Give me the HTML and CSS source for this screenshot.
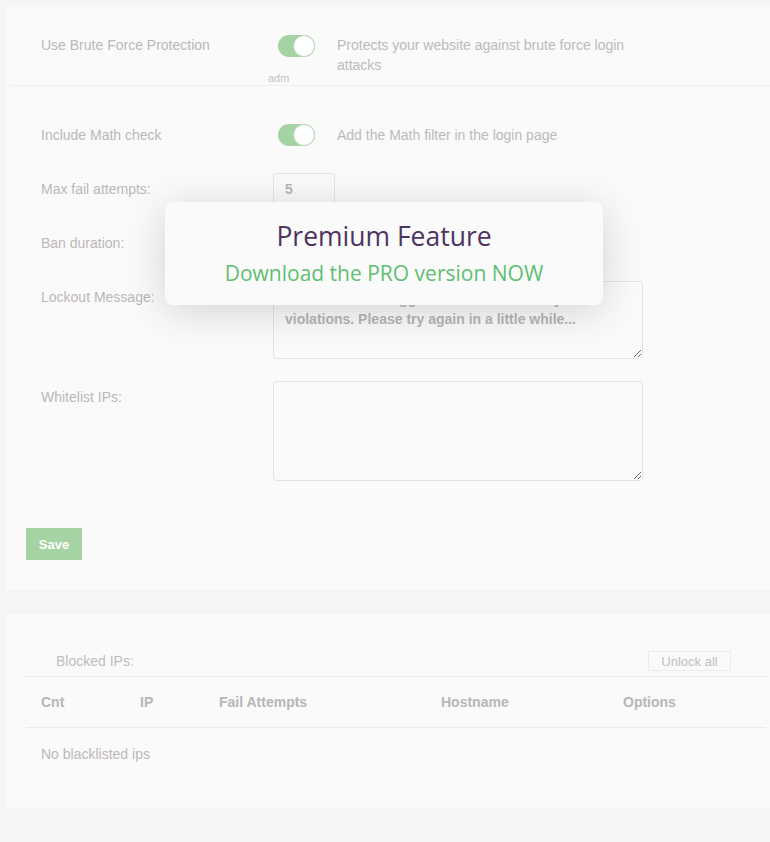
FILE: index.html
```html
<!DOCTYPE html>
<html>
<head>
<meta charset="utf-8">
<link rel="stylesheet" href="styles.css">
</head>
<body>
<div class="page">
  <section class="panel panel-settings">
    <div class="row-first">
      <div class="label">Use Brute Force Protection</div>
      <div class="ctrl">
        <span class="toggle"><span class="knob"></span></span>
        <span class="user">adm</span>
      </div>
      <div class="desc">Protects your website against brute force login attacks</div>
    </div>
    <div class="sep"></div>
    <div class="form">
      <div class="label">Include Math check</div>
      <div class="ctrl ctrl-inline">
        <span class="toggle"><span class="knob"></span></span>
        <span class="desc-inline">Add the Math filter in the login page</span>
      </div>

      <div class="label">Max fail attempts:</div>
      <div class="ctrl"><input class="num" type="text" value="5"></div>

      <div class="label">Ban duration:</div>
      <div class="ctrl"><input class="num" type="text" value="60"></div>

      <div class="label">Lockout Message:</div>
      <div class="ctrl"><textarea class="area area-msg">You have been logged out due to security violations. Please try again in a little while...</textarea></div>

      <div class="label">Whitelist IPs:</div>
      <div class="ctrl"><textarea class="area area-ips"></textarea></div>
    </div>
    <button class="save">Save</button>
  </section>

  <section class="panel panel-blocked">
    <div class="blocked-head">
      <span class="blocked-title">Blocked IPs:</span>
      <button class="unlock">Unlock all</button>
    </div>
    <table class="ips">
      <thead>
        <tr>
          <th class="c-cnt">Cnt</th>
          <th class="c-ip">IP</th>
          <th class="c-fail">Fail Attempts</th>
          <th class="c-host">Hostname</th>
          <th class="c-opt">Options</th>
        </tr>
      </thead>
      <tbody>
        <tr><td colspan="5">No blacklisted ips</td></tr>
      </tbody>
    </table>
  </section>

  <div class="modal">
    <div class="modal-title">Premium Feature</div>
    <div class="modal-link">Download the PRO version NOW</div>
  </div>
</div>
</body>
</html>
```

FILE: styles.css
```css
* { box-sizing: border-box; }

html, body {
  margin: 0;
  padding: 0;
  background: #f5f5f5;
}

body {
  font-family: "Liberation Sans", Arial, sans-serif;
  font-size: 14px;
  color: #bcb7b7;
}

.page {
  position: relative;
  width: 770px;
  height: 842px;
  padding-top: 5px;
}

.panel {
  background: #fafafa;
  margin-left: 6px;
}

.panel-settings {
  height: 585px;
  padding-top: 30px;
}

.row-first {
  display: grid;
  grid-template-columns: 232px 64px 300px;
  padding-left: 35px;
  line-height: 20px;
}

.label {
  line-height: 20px;
}

.toggle {
  display: block;
  position: relative;
  width: 37px;
  height: 22px;
  border-radius: 11px;
  background: #a6d3a3;
  margin-left: 5px;
}

.knob {
  position: absolute;
  right: 0;
  top: 0;
  width: 22px;
  height: 22px;
  border-radius: 50%;
  background: #ffffff;
  border: 1px solid #b8dcb6;
}

.user {
  display: block;
  margin-left: -5px;
  margin-top: 14px;
  font-size: 11px;
  line-height: 14px;
  color: #c4c4c4;
}

.desc {
  color: #bdb9bb;
}

.sep {
  height: 1px;
  background: #efefef;
  margin-left: 4px;
}

.form {
  display: grid;
  grid-template-columns: 232px 1fr;
  row-gap: 22px;
  padding-left: 35px;
  padding-top: 33px;
}

.form .label {
  padding-top: 6px;
}

.ctrl-inline {
  display: flex;
  align-items: center;
  height: 32px;
}

.desc-inline {
  margin-left: 22px;
  color: #bdb9bb;
}

.num {
  display: block;
  width: 62px;
  height: 32px;
  border: 1px solid #e6e6e6;
  border-radius: 4px;
  background: #fafafa;
  padding: 0 11px;
  font-family: "Liberation Sans", Arial, sans-serif;
  font-size: 14px;
  font-weight: bold;
  color: #b8b8b8;
}

.area {
  display: block;
  width: 370px;
  border: 1px solid #e3e3e3;
  border-radius: 4px;
  background: #fafafa;
  padding: 7px 11px;
  font-family: "Liberation Sans", Arial, sans-serif;
  font-size: 14px;
  font-weight: bold;
  line-height: 20px;
  color: #b8b5b5;
  resize: both;
}

.area-msg { height: 78px; }
.area-ips { height: 100px; }

.save {
  display: block;
  margin: 47px 0 0 20px;
  width: 56px;
  height: 32px;
  border: 0;
  background: #a6d3a3;
  color: #ffffff;
  font-family: "Liberation Sans", Arial, sans-serif;
  font-size: 13px;
  font-weight: bold;
  padding: 0;
}

.panel-blocked {
  margin-top: 24px;
  height: 194px;
  padding: 37px 4px 0 20px;
}

.blocked-head {
  display: flex;
  justify-content: space-between;
  align-items: center;
  height: 20px;
  padding: 0 35px 0 30px;
  margin-bottom: 5px;
}

.blocked-title {
  color: #c0bcbe;
}

.unlock {
  width: 83px;
  height: 20px;
  border: 1px solid #ececec;
  background: #fafafa;
  color: #c2bcc2;
  font-family: "Liberation Sans", Arial, sans-serif;
  font-size: 13px;
  padding: 0;
}

.ips {
  width: 740px;
  border-collapse: collapse;
  table-layout: fixed;
}

.ips th {
  text-align: left;
  font-weight: bold;
  color: #b9b5b9;
  height: 51px;
  padding: 0 0 0 15px;
  border-top: 1px solid #ececec;
  border-bottom: 1px solid #ececec;
}

.c-cnt { width: 99px; }
.c-ip { width: 79px; }
.c-fail { width: 222px; }
.c-host { width: 182px; }
.c-opt { width: 158px; }

.ips td {
  height: 52px;
  padding: 0 0 0 15px;
  color: #bdb8b8;
}

.modal {
  position: absolute;
  left: 165px;
  top: 202px;
  width: 438px;
  height: 103px;
  background: #fafafa;
  border-radius: 8px;
  box-shadow: 0 6px 40px rgba(0, 0, 0, 0.16);
  text-align: center;
  font-family: "Open Sans", sans-serif;
  padding-top: 15px;
}

.modal-title {
  font-size: 26.5px;
  line-height: 38px;
  color: #4e3461;
}

.modal-link {
  font-size: 21px;
  line-height: 36px;
  color: #5fbf73;
}
```
